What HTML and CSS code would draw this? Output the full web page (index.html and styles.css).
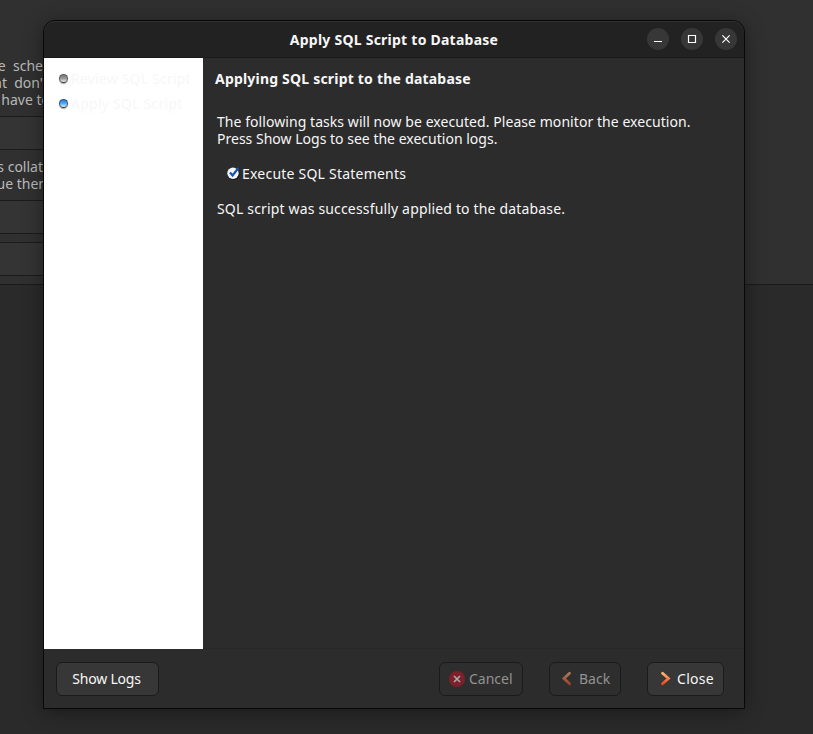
FILE: index.html
```html
<!DOCTYPE html>
<html lang="en">
<head>
<meta charset="utf-8">
<title>Apply SQL Script to Database</title>
<link rel="stylesheet" href="styles.css">
</head>
<body>
<div class="backdrop">
  <div class="editor">
    <div class="note schema-note"><span>he&nbsp; sche</span><span>at&nbsp; don'</span><span class="overrun">have to</span></div>
    <div class="field"></div>
    <div class="note collation-note"><span>s collat</span><span class="overrun">ue then</span></div>
    <div class="field"></div>
    <div class="field last"></div>
  </div>
</div>
<main class="window">
  <header class="titlebar">
    <h1><span class="t-title">Apply SQL Script to Database</span></h1>
    <div class="controls">
      <button aria-label="Minimize"><svg viewBox="0 0 22 22"><path d="M7 13.5h8"/></svg></button>
      <button aria-label="Maximize"><svg viewBox="0 0 22 22"><path d="M7.5 7.5h7v7h-7z"/></svg></button>
      <button aria-label="Close"><svg viewBox="0 0 22 22"><path d="M7.4 7.4l7.2 7.2M14.6 7.4l-7.2 7.2"/></svg></button>
    </div>
  </header>
  <div class="body">
    <aside class="steps">
      <div class="step"><i class="dot"></i><span class="t-review">Review SQL Script</span></div>
      <div class="step"><i class="dot active"></i><span class="t-apply">Apply SQL Script</span></div>
    </aside>
    <section class="content">
      <h2><span class="t-heading">Applying SQL script to the database</span></h2>
      <p class="intro"><span class="t-intro">The following tasks will now be executed. Please monitor the execution.</span><br><span class="t-press">Press Show Logs to see the execution logs.</span></p>
      <div class="task">
        <svg viewBox="0 0 13 13"><circle cx="6.7" cy="7" r="6" fill="#171717"/><circle cx="6" cy="6.2" r="5.7" fill="#f4f6fa"/><path d="M3 5.4l2.6 3L11.2 1.2" fill="none" stroke="#1555b5" stroke-width="2.3"/></svg>
        <span class="t-task">Execute SQL Statements</span>
      </div>
      <p class="result"><span class="t-result">SQL script was successfully applied to the database.</span></p>
    </section>
  </div>
  <footer class="footer">
    <button class="btn logs"><span class="t-logs">Show Logs</span></button>
    <button class="btn cancel" disabled><svg width="16" height="16" viewBox="0 0 16 16"><circle cx="8" cy="8" r="8" fill="#7e1f2c"/><path d="M5 5l6 6M11 5l-6 6" stroke="#aaa" stroke-width="1.6"/></svg><span class="t-cancel">Cancel</span></button>
    <button class="btn back" disabled><svg width="11" height="16" viewBox="0 0 11 16"><defs><linearGradient id="dim" x2="0" y2="1"><stop stop-color="#a77955"/><stop offset="1" stop-color="#99472b"/></linearGradient></defs><path d="M8.5 2.3L3 7.5l5.5 5.2" fill="none" stroke="url(#dim)" stroke-width="2.8" stroke-linecap="round"/></svg><span class="t-back">Back</span></button>
    <button class="btn close"><svg width="11" height="16" viewBox="0 0 11 16"><defs><linearGradient id="bright" x2="0" y2="1"><stop stop-color="#ffb477"/><stop offset="1" stop-color="#ed4b1c"/></linearGradient></defs><path d="M2.5 2.3L8.5 7.5l-6 5.2" fill="none" stroke="url(#bright)" stroke-width="2.8" stroke-linecap="round"/></svg><span class="t-close">Close</span></button>
  </footer>
</main>
</body>
</html>
```
FILE: styles.css
```css
* { box-sizing: border-box; }
body { margin: 0; width: 813px; height: 734px; overflow: hidden; background: #2a2a2a; color: #f7f7f7; font: 14px/17px "Noto Sans", sans-serif; }
span { white-space: nowrap; }
button { font: inherit; color: inherit; padding: 0; border: 0; }
.editor { height: 285px; background: #303030; border-bottom: 1px solid #1b1b1b; padding-top: 57px; overflow: hidden; }
.note { width: 43px; color: #b9b9b9; display: flex; flex-direction: column; align-items: flex-end; }
.schema-note { height: 59px; }
.collation-note { height: 50px; padding-top: 8px; }
.overrun { margin-right: -7px; }
.collation-note .overrun { margin-right: -4px; }
.field { height: 34px; width: 60px; background: #343434; border: solid #1b1b1b; border-width: 1px 0; }
.field.last { margin-top: 8px; }
.window { position: absolute; left: 43px; top: 20px; width: 702px; height: 689px; display: flex; flex-direction: column; border: 1px solid #080808; border-radius: 12px 12px 0 0; background: #2c2c2c; box-shadow: 0 3px 20px rgba(0,0,0,.38); overflow: hidden; }
.titlebar { height: 37px; flex: none; display: grid; grid-template-columns: 97px 1fr 97px; align-items: center; background: #222; border-bottom: 1px solid #191919; box-shadow: inset 0 1px #303030; border-radius: 11px 11px 0 0; }
h1, h2, p { margin: 0; font-size: 14px; }
p { font-weight: 400; }
h1 { grid-column: 2; text-align: center; padding-top: 1px; }
.controls { display: flex; gap: 12px; }
.controls button { width: 22px; height: 22px; border-radius: 50%; background: #373737; }
.controls svg { display: block; width: 22px; fill: none; stroke: #fff; stroke-width: 1.2; }
.t-title { letter-spacing: .24px; }
.t-heading { letter-spacing: .2px; }
.t-intro { letter-spacing: .06px; }
.t-press { letter-spacing: .01px; }
.t-task { letter-spacing: .22px; }
.t-result { letter-spacing: .165px; }
.t-review { letter-spacing: .2px; }
.t-apply { letter-spacing: .25px; }
.t-logs { letter-spacing: -.2px; margin-right: 2px; }
.t-close { letter-spacing: .3px; }
.body { flex: 1; display: flex; min-height: 0; }
.steps { width: 159px; background: #fff; padding: 12px 0 0 15px; color: #f7f7f7; }
.step { height: 25px; display: flex; gap: 3px; }
.dot { width: 9px; height: 9px; margin-top: 4px; border-radius: 50%; border: 1px solid #5c5c5c; border-bottom-color: #353535; background: linear-gradient(#777, #999 50%, #f4f4f4); box-shadow: 0 1px 1px #aaa; flex: none; }
.dot.active { border-color: #27578f; border-bottom-color: #303438; background: linear-gradient(#257cd0, #58aaf4 50%, #dff4ff); }
.content { flex: 1; padding: 12px 12px 0; border-bottom: 1px solid #282828; }
.intro { margin: 26px 0 0 2px; }
.task { margin: 18px 0 0 12px; display: flex; gap: 2px; }
.task svg { width: 13px; height: 13px; margin-top: 2px; }
.result { margin: 18px 0 0 2px; }
.footer { height: 59px; flex: none; display: flex; align-items: flex-start; padding: 13px 20px 0 12px; }
.btn { height: 34px; border: 1px solid #1b1b1b; border-radius: 6px; background: #373737; display: flex; align-items: center; }
.btn span { padding-bottom: 2px; }
.btn:disabled { background: #2e2e2e; color: #929292; }
.logs { width: 103px; justify-content: center; }
.cancel { width: 84px; margin-left: auto; padding-left: 9px; gap: 4px; }
.back { width: 72px; margin-left: 26px; padding-left: 11px; gap: 7px; }
.close { width: 77px; margin-left: 26px; padding-left: 12px; gap: 6px; }
```
